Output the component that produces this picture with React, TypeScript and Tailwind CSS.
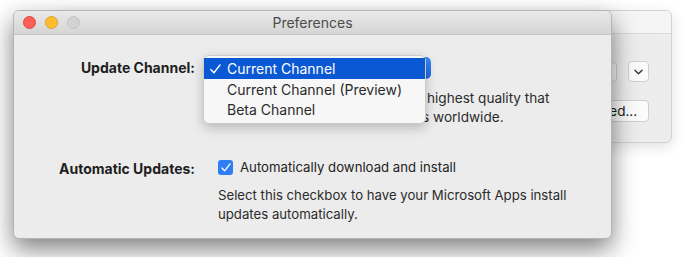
import type { ReactNode } from "react";

const font = { fontFamily: "Inter, 'Liberation Sans', sans-serif" };

function Check({ className }: { className?: string }) {
  return (
    <svg viewBox="0 0 12 11" className={className} fill="none" stroke="currentColor" strokeWidth="1.6" strokeLinecap="round" strokeLinejoin="round">
      <path d="M1 6.2 L4.3 9.6 L11 1" />
    </svg>
  );
}

function BackWindow() {
  return (
    <div className="absolute left-[60px] top-[10px] flex h-[133px] w-[612px] flex-col overflow-hidden rounded-[6px] border border-[#d2d2d2] bg-[#e7e7e7] shadow-[0_4px_14px_rgba(0,0,0,0.12)]">
      <div className="h-[23px] shrink-0 border-b border-[#dadada] bg-[#f5f5f5]" />
      <div className="flex flex-1 flex-col items-end bg-gradient-to-r from-[#e0e0e0] to-[#ededed] pr-[22px] pt-[27px]">
        <div className="flex items-center gap-[11px]">
          <div className="h-[20px] w-[120px] rounded-[4px] border border-[#cfcfcf] bg-[#f9f9f9]" />
          <div className="flex h-[21px] w-[21px] items-center justify-center rounded-[4px] border border-[#cfcfcf] bg-[#fbfbfb] text-[#333]">
            <svg viewBox="0 0 10 6" className="h-[6px] w-[9px]" fill="none" stroke="currentColor" strokeWidth="1.5" strokeLinecap="round" strokeLinejoin="round">
              <path d="M1 1 L5 5 L9 1" />
            </svg>
          </div>
        </div>
        <div className="mt-[18px] flex h-[22px] w-[100px] items-center justify-center rounded-[4px] border border-[#cfcfcf] bg-[#fbfbfb] text-[13.5px] text-[#222]">
          Advanced...
        </div>
      </div>
    </div>
  );
}

function Row({ label, children }: { label: string; children: ReactNode }) {
  return (
    <div className="grid grid-cols-[190px_1fr]">
      <div className="pr-[9px] text-right text-[14px] font-bold text-[#1e1e1e]">{label}</div>
      <div>{children}</div>
    </div>
  );
}

function ChannelMenu() {
  const items = ["Current Channel (Preview)", "Beta Channel"];
  return (
    <div className="absolute left-[-1px] top-[-2px] w-[223px] rounded-[6px] border border-[#cbcbcb] bg-[#f7f7f7] pb-[4px] pt-[2px] shadow-[0_4px_12px_rgba(0,0,0,0.22)]">
      <div className="flex h-[21px] items-center bg-[#0a58d3] text-[14px] text-white">
        <Check className="ml-[6px] h-[10px] w-[11px]" />
        <span className="ml-[6px]">Current Channel</span>
      </div>
      {items.map((item) => (
        <div key={item} className="flex h-[20px] items-center pl-[23px] text-[14px] text-[#2a2a2a]">
          {item}
        </div>
      ))}
    </div>
  );
}

function FrontWindow() {
  return (
    <div className="absolute left-[13px] top-[10px] flex h-[229px] w-[599px] flex-col overflow-hidden rounded-[6px] border border-[#b5b5b5] bg-[#ececec] shadow-[0_10px_24px_rgba(0,0,0,0.5)]">
      <div className="relative flex h-[24px] shrink-0 items-center border-b border-[#c6c6c6] bg-gradient-to-b from-[#e9e9e9] to-[#d5d5d5]">
        <div className="flex gap-[9px] pl-[9px]">
          <span className="h-[13px] w-[13px] rounded-full border border-[#e0443e] bg-[#fe5f57]" />
          <span className="h-[13px] w-[13px] rounded-full border border-[#dea123] bg-[#febc2e]" />
          <span className="h-[13px] w-[13px] rounded-full border border-[#c4c4c4] bg-[#d3d3d3]" />
        </div>
        <div className="absolute inset-0 flex items-center justify-center text-[14px] text-[#4b4b4b]">Preferences</div>
      </div>

      <div className="flex flex-col pt-[22px]">
        <Row label="Update Channel:">
          <div className="relative h-[22px]">
            <div className="flex h-[22px] w-[227px] justify-end rounded-[5px] bg-[#fdfdfd]">
              <div className="h-[22px] w-[18px] rounded-r-[5px] bg-gradient-to-b from-[#3d8bf7] to-[#1766e0]" />
            </div>
            <ChannelMenu />
          </div>
        </Row>
        <div className="mt-[10px] grid grid-cols-[190px_1fr]">
          <div />
          <div className="text-[13.6px] leading-[19px] text-[#2b2b2b]">
            <div className="ml-[223px] whitespace-nowrap">highest quality that</div>
            <div className="ml-[218px] whitespace-nowrap">s worldwide.</div>
          </div>
        </div>

        <div className="mt-[31px]">
          <Row label="Automatic Updates:">
            <div className="ml-[14px] flex items-center gap-[7px]">
              <span className="flex h-[15px] w-[15px] items-center justify-center rounded-[3px] bg-[#2f7df6] text-white">
                <Check className="h-[9px] w-[10px]" />
              </span>
              <span className="text-[13.2px] text-[#222]">Automatically download and install</span>
            </div>
            <div className="ml-[14px] mt-[8px] text-[13.2px] leading-[19px] text-[#2b2b2b]">
              <div>Select this checkbox to have your Microsoft Apps install</div>
              <div>updates automatically.</div>
            </div>
          </Row>
        </div>
      </div>
    </div>
  );
}

export default function App() {
  return (
    <div className="relative h-[257px] w-[685px] overflow-hidden bg-white" style={font}>
      <BackWindow />
      <FrontWindow />
    </div>
  );
}
